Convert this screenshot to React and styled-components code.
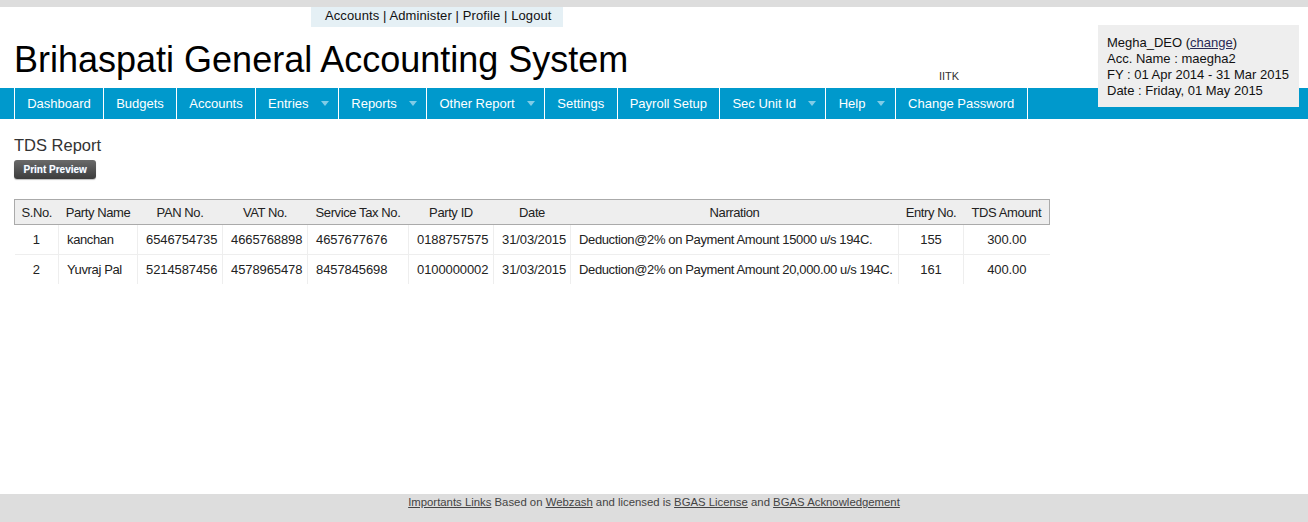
import styled, { createGlobalStyle } from "styled-components";

const GlobalStyle = createGlobalStyle`
  html, body {
    margin: 0;
    padding: 0;
    background: #fff;
    font-family: "Liberation Sans", Arial, sans-serif;
    color: #222;
  }
  #root {
    min-height: 100vh;
  }
`;

const Page = styled.div`
  position: relative;
  display: flex;
  flex-direction: column;
  min-height: 100vh;
`;

const TopStrip = styled.div`
  height: 7px;
  background: #dddddd;
`;

const TopLinks = styled.div`
  margin-left: 311px;
  width: 252px;
  box-sizing: border-box;
  height: 20px;
  padding: 0 14px;
  background: #e5f0f5;
  font-size: 13px;
  line-height: 18px;
  letter-spacing: 0.1px;
  color: #111;
  white-space: nowrap;
`;

const TitleRow = styled.div`
  display: grid;
  grid-template-columns: 925px auto;
  align-items: end;
  padding: 12px 0 8px 14px;
`;

const Title = styled.h1`
  margin: 0;
  font-size: 36px;
  line-height: 41px;
  font-weight: normal;
  color: #000;
  white-space: nowrap;
`;

const Org = styled.span`
  font-size: 11px;
  line-height: 13px;
  margin-bottom: -3px;
  color: #333;
`;

const UserBox = styled.div`
  position: absolute;
  top: 25px;
  right: 9px;
  width: 201px;
  box-sizing: border-box;
  padding: 10px 9px 8px;
  background: #eeeeee;
  font-size: 13px;
  line-height: 16px;
  color: #111;
  white-space: nowrap;
  z-index: 2;
`;

const InlineLink = styled.a`
  color: #2a2a55;
  text-decoration: underline;
`;

const Nav = styled.nav`
  display: flex;
  height: 31px;
  padding-left: 14px;
  background: #0099cc;
`;

const NavItem = styled.div`
  display: flex;
  align-items: center;
  padding: 0 ${(p) => (p.$drop ? "9.5px" : "12.2px")} 0 12.2px;
  border-left: ${(p) => (p.$first ? "1px solid #fff" : "none")};
  border-right: 1px solid #fff;
  color: #fff;
  font-size: 13px;
  white-space: nowrap;
`;

const Caret = styled.span`
  margin-left: 12px;
  width: 0;
  height: 0;
  border-left: 4px solid transparent;
  border-right: 4px solid transparent;
  border-top: 5px solid #80cce6;
`;

const Content = styled.main`
  padding: 17px 14px 0;
`;

const Heading = styled.h2`
  margin: 0;
  font-size: 16.5px;
  line-height: 19px;
  font-weight: normal;
  color: #333;
`;

const PrintButton = styled.button`
  display: block;
  margin-top: 5px;
  height: 19px;
  padding: 0 9px 0 9.5px;
  border: none;
  border-radius: 3px;
  background: linear-gradient(#6a6a6a, #3c3c3c);
  box-shadow: 0 1px 1px rgba(0, 0, 0, 0.25);
  color: #fff;
  font-family: "Liberation Sans", Arial, sans-serif;
  font-size: 10px;
  font-weight: bold;
  text-shadow: 0 0 1px #6b8fb8;
  cursor: pointer;
`;

const Table = styled.table`
  margin-top: 20px;
  width: 1035px;
  table-layout: fixed;
  border-collapse: collapse;
  font-size: 13px;
  color: #222;
`;

const HeadCell = styled.th`
  height: 24px;
  padding: 0 2px;
  background: #eeeeee;
  border-top: 1px solid #aaa;
  border-bottom: 1px solid #aaa;
  border-left: ${(p) => (p.$first ? "1px solid #aaa" : "none")};
  border-right: ${(p) => (p.$last ? "1px solid #aaa" : "none")};
  font-weight: normal;
  letter-spacing: -0.4px;
  text-align: center;
  white-space: nowrap;
`;

const Cell = styled.td`
  height: 29px;
  padding: 0 8px;
  border-right: ${(p) => (p.$last ? "none" : "1px solid #eee")};
  border-bottom: ${(p) => (p.$lastRow ? "none" : "1px solid #eee")};
  text-align: ${(p) => p.$align || "left"};
  letter-spacing: ${(p) => (p.$text ? "-0.37px" : "-0.1px")};
  white-space: nowrap;
`;

const Footer = styled.footer`
  margin-top: auto;
  height: 28px;
  box-sizing: border-box;
  padding-top: 2px;
  background: #dddddd;
  text-align: center;
  font-size: 11.35px;
  line-height: 13px;
  color: #444;
`;

const FooterLink = styled.a`
  color: #444;
  text-decoration: underline;
`;

const navItems = [
  ["Dashboard"],
  ["Budgets"],
  ["Accounts"],
  ["Entries", true],
  ["Reports", true],
  ["Other Report", true],
  ["Settings"],
  ["Payroll Setup"],
  ["Sec Unit Id", true],
  ["Help", true],
  ["Change Password"],
];

const columns = [
  { name: "S.No.", width: 44, align: "center" },
  { name: "Party Name", width: 79, text: true },
  { name: "PAN No.", width: 85 },
  { name: "VAT No.", width: 85 },
  { name: "Service Tax No.", width: 101 },
  { name: "Party ID", width: 85 },
  { name: "Date", width: 77 },
  { name: "Narration", width: 328, text: true },
  { name: "Entry No.", width: 65, align: "center" },
  { name: "TDS Amount", width: 86, align: "center" },
];

const rows = [
  ["1", "kanchan", "6546754735", "4665768898", "4657677676", "0188757575", "31/03/2015", "Deduction@2% on Payment Amount 15000 u/s 194C.", "155", "300.00"],
  ["2", "Yuvraj Pal", "5214587456", "4578965478", "8457845698", "0100000002", "31/03/2015", "Deduction@2% on Payment Amount 20,000.00 u/s 194C.", "161", "400.00"],
];

export default function App() {
  return (
    <Page>
      <GlobalStyle />
      <TopStrip />
      <TopLinks>Accounts | Administer | Profile | Logout</TopLinks>
      <TitleRow>
        <Title>Brihaspati General Accounting System</Title>
        <Org>IITK</Org>
      </TitleRow>
      <UserBox>
        Megha_DEO (<InlineLink>change</InlineLink>)<br />
        Acc. Name : maegha2<br />
        FY : 01 Apr 2014 - 31 Mar 2015<br />
        Date : Friday, 01 May 2015
      </UserBox>
      <Nav>
        {navItems.map(([label, drop], i) => (
          <NavItem key={label} $drop={drop} $first={i === 0}>
            {label}
            {drop && <Caret />}
          </NavItem>
        ))}
      </Nav>
      <Content>
        <Heading>TDS Report</Heading>
        <PrintButton>Print Preview</PrintButton>
        <Table>
          <colgroup>
            {columns.map((c) => (
              <col key={c.name} style={{ width: c.width }} />
            ))}
          </colgroup>
          <thead>
            <tr>
              {columns.map((c, i) => (
                <HeadCell key={c.name} $first={i === 0} $last={i === columns.length - 1}>
                  {c.name}
                </HeadCell>
              ))}
            </tr>
          </thead>
          <tbody>
            {rows.map((row, r) => (
              <tr key={r}>
                {row.map((value, i) => (
                  <Cell
                    key={i}
                    $align={columns[i].align}
                    $text={columns[i].text}
                    $last={i === row.length - 1}
                    $lastRow={r === rows.length - 1}
                  >
                    {value}
                  </Cell>
                ))}
              </tr>
            ))}
          </tbody>
        </Table>
      </Content>
      <Footer>
        <FooterLink>Importants Links</FooterLink> Based on <FooterLink>Webzash</FooterLink> and licensed is{" "}
        <FooterLink>BGAS License</FooterLink> and <FooterLink>BGAS Acknowledgement</FooterLink>
      </Footer>
    </Page>
  );
}
